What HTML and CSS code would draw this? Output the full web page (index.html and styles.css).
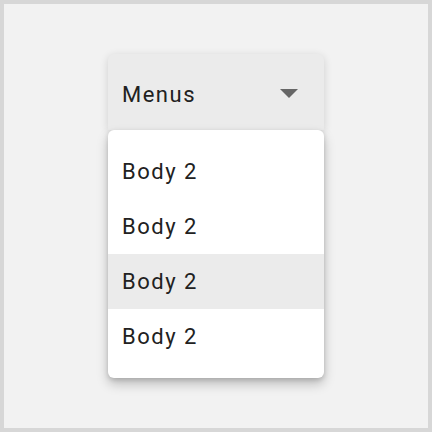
FILE: index.html
```html
<!DOCTYPE html>
<html>
<head>
<meta charset="utf-8">
<link rel="stylesheet" href="styles.css">
</head>
<body>
<div class="frame">
  <div class="menu">
    <div class="menu-header">
      <span class="menu-title">Menus</span>
      <svg class="caret" width="18" height="9" viewBox="0 0 10 5"><path d="M0 0L5 5L10 0Z" fill="#666"/></svg>
    </div>
    <ul class="menu-list">
      <li class="menu-item">Body 2</li>
      <li class="menu-item">Body 2</li>
      <li class="menu-item is-active">Body 2</li>
      <li class="menu-item">Body 2</li>
    </ul>
  </div>
</div>
</body>
</html>
```
FILE: styles.css
```css
html, body {
  margin: 0;
  padding: 0;
}
body {
  width: 432px;
  height: 432px;
  font-family: Roboto, "Liberation Sans", sans-serif;
}
.frame {
  box-sizing: border-box;
  width: 432px;
  height: 432px;
  border: 4px solid #d7d7d7;
  background: #f2f2f2;
  padding: 50px 0 0 104px;
}
.menu {
  width: 216px;
  display: flex;
  flex-direction: column;
}
.menu-header {
  box-sizing: border-box;
  height: 76px;
  padding: 4px 26px 0 14px;
  display: flex;
  align-items: center;
  justify-content: space-between;
  background: #ebebeb;
  border-radius: 6px 6px 0 0;
  box-shadow: 0 2px 8px rgba(0, 0, 0, 0.14);
  font-size: 22px;
  letter-spacing: 1.5px;
  color: #212121;
}
.caret {
  display: block;
  margin-top: -2px;
}
.menu-list {
  position: relative;
  z-index: 1;
  list-style: none;
  margin: 0;
  padding: 14px 0;
  background: #fff;
  border-radius: 6px;
  box-shadow: 0 6px 12px rgba(0, 0, 0, 0.22), 0 2px 5px rgba(0, 0, 0, 0.14);
}
.menu-item {
  box-sizing: border-box;
  height: 55px;
  padding: 0 14px;
  display: flex;
  align-items: center;
  font-size: 22px;
  letter-spacing: 1.5px;
  color: #212121;
}
.menu-item.is-active {
  background: #ebebeb;
}
```
